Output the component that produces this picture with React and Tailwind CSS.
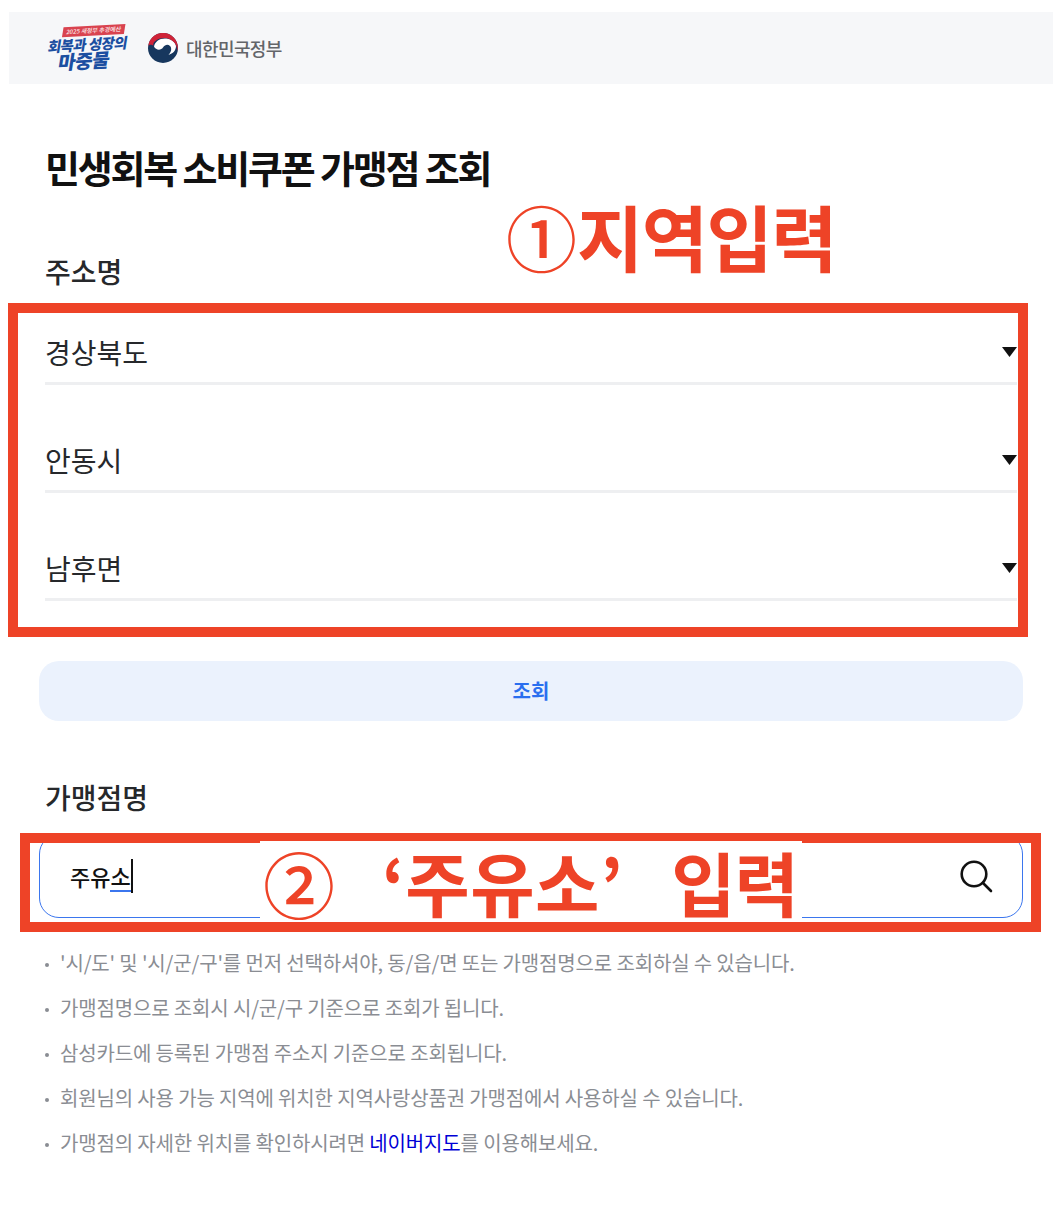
import React from "react";

const font = { fontFamily: '"Noto Sans CJK KR", "Noto Sans", sans-serif' };

function Taegeuk() {
  return (
    <svg width="30" height="30" viewBox="0 0 30 30" className="shrink-0">
      <circle cx="15" cy="15" r="15" fill="#17375e" />
      <path d="M6 13.5 C8 17.5 13 17.5 15 14.5 C17 11.5 20 11 22 13 C24 15 23.5 19 20.5 22 C25 20.5 28 17.5 28 13 C27 8 22 5.5 17 5.5 C11 5.5 7 9 6 13.5 Z" fill="#ffffff" />
      <path d="M0.3 13 A14.8 14.8 0 0 1 29.8 15 C29.8 16 29.7 17 29.4 18 C29.3 10.5 23.5 5 16.5 5 C9 5 4 9.5 5.5 13 C4.5 11.5 1.5 11 0.3 13 Z" fill="#cf2338" />
    </svg>
  );
}

function Logo() {
  return (
    <div className="relative w-[84px] h-[44px] shrink-0 -skew-x-12 -rotate-[3deg] text-center font-black text-[#1c4fa1]">
      <div className="absolute left-[14px] top-0 w-[62px] h-[10px] bg-[#d9434f] text-white/90 text-[6px] leading-[10px] font-medium whitespace-nowrap overflow-hidden">2025 새정부 추경예산</div>
      <div className="absolute left-[-1px] top-[9px] w-[84px] text-[14.5px] leading-[18px] tracking-[-0.6px] whitespace-nowrap">회복과 성장의</div>
      <div className="absolute left-[10px] top-[23px] w-[60px] text-[19px] leading-[22px] tracking-[-0.4px] whitespace-nowrap">마중물</div>
    </div>
  );
}

function SelectRow({ value, mt }) {
  return (
    <div className={`${mt} mx-[45px] mr-[39px] h-[52px] border-b-[3px] border-[#eeeff1] flex items-start justify-between`}>
      <span className="text-[28px] leading-[38px] text-[#26282b]">{value}</span>
      <svg width="15" height="10" viewBox="0 0 15 10" className="mt-[14px]">
        <path d="M0 0 H15 L7.5 10 Z" fill="#111" />
      </svg>
    </div>
  );
}

const notes = [
  "'시/도' 및 '시/군/구'를 먼저 선택하셔야, 동/읍/면 또는 가맹점명으로 조회하실 수 있습니다.",
  "가맹점명으로 조회시 시/군/구 기준으로 조회가 됩니다.",
  "삼성카드에 등록된 가맹점 주소지 기준으로 조회됩니다.",
  "회원님의 사용 가능 지역에 위치한 지역사랑상품권 가맹점에서 사용하실 수 있습니다.",
];

function Note({ children }) {
  return (
    <li className="h-[45px] flex items-center text-[20px] tracking-[-0.15px] text-[#8a8d93] whitespace-nowrap">
      <span className="w-[4px] h-[4px] rounded-full bg-[#8a8d93] ml-[45px] mr-[11px] mt-[4px] shrink-0" />
      <span>{children}</span>
    </li>
  );
}

export default function App() {
  return (
    <div style={font} className="relative w-[1056px] h-[1210px] bg-white overflow-hidden">
      <div className="pt-[12px] pl-[9px] pr-[3px]">
        <header className="h-[72px] bg-[#f6f7f9] flex items-center pl-[37px]">
          <Logo />
          <div className="ml-[18px] flex items-center gap-[8px]">
            <Taegeuk />
            <span className="text-[18px] font-medium text-[#636569] tracking-[-0.6px]">대한민국정부</span>
          </div>
        </header>
      </div>

      <h1 className="mt-[57px] ml-[45px] text-[38px] leading-[52px] font-bold text-[#111] tracking-[-2.2px] whitespace-nowrap">민생회복 소비쿠폰 가맹점 조회</h1>

      <h2 className="mt-[58px] ml-[45px] text-[28px] leading-[40px] font-medium text-[#26282b]">주소명</h2>

      <SelectRow value="경상북도" mt="mt-[42px]" />
      <SelectRow value="안동시" mt="mt-[56px]" />
      <SelectRow value="남후면" mt="mt-[56px]" />

      <button className="block mt-[60px] ml-[39px] w-[984px] h-[60px] rounded-[20px] bg-[#ebf2fd] text-[#2a6fef] text-[20px] font-semibold">조회</button>

      <h2 className="mt-[56px] ml-[45px] text-[28px] leading-[40px] font-medium text-[#26282b]">가맹점명</h2>

      <div className="mt-[17px] ml-[39px] w-[984px] h-[84px] rounded-[20px] border border-[#3b76ee] flex items-center justify-between pl-[30px] pr-[29px]">
        <div className="relative flex items-center text-[22px] text-[#111] font-medium h-[34px] border-r-2 border-[#111] leading-none">
          주유
          <span className="border-b-[2px] border-[#3b76ee] leading-[30px]">소</span>
        </div>
        <svg width="34" height="34" viewBox="0 0 34 34" fill="none" stroke="#111" strokeWidth="2.6" strokeLinecap="round">
          <circle cx="15" cy="15" r="12.3" />
          <path d="M24 24 L32 32" />
        </svg>
      </div>

      <ul className="mt-[22px]">
        {notes.map((n) => (
          <Note key={n}>{n}</Note>
        ))}
        <Note>
          가맹점의 자세한 위치를 확인하시려면 <span className="text-[#0000d6]">네이버지도</span>를 이용해보세요.
        </Note>
      </ul>

      <div className="absolute left-[8px] top-[303px] w-[1020px] h-[334px] border-[10px] border-[#ee4327]" />
      <div className="absolute left-[20px] top-[833px] w-[1021px] h-[99px] border-[10px] border-[#ee4327]" />

      <div className="absolute left-[506px] top-[191px] flex items-center h-[88px] font-bold text-[#ee4327] whitespace-nowrap leading-none">
        <span className="text-[71px] font-medium">①</span>
        <span className="text-[72px] tracking-[-1.5px]">지역입력</span>
      </div>

      <div className="absolute left-[260px] top-[841px] w-[542px] h-[81px] bg-white flex items-center text-[#ee4327] font-bold text-[70px] leading-none whitespace-nowrap">
        <span className="ml-[3px] text-[72px] font-medium">②</span>
        <span className="ml-[47px] tracking-[0.5px]">‘주유소’</span>
        <span className="ml-[48px] tracking-[-1px]">입력</span>
      </div>
    </div>
  );
}
